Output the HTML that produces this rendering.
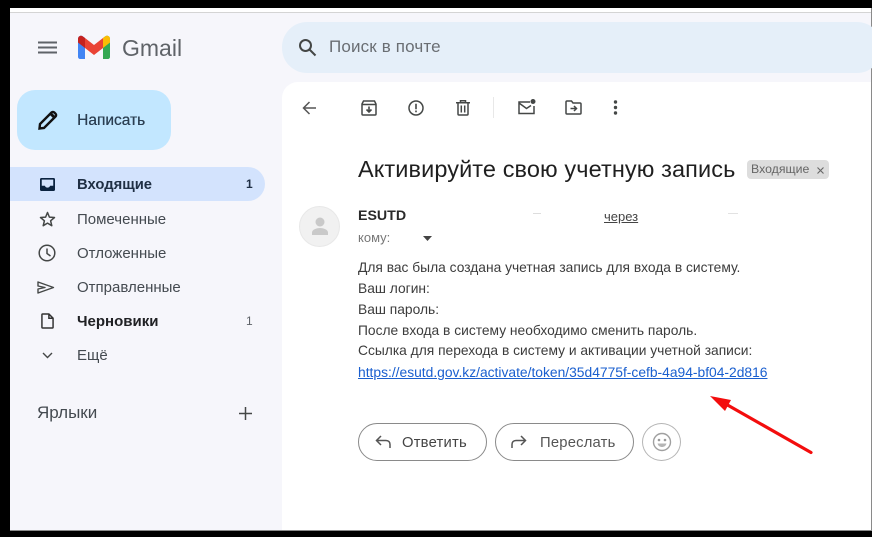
<!DOCTYPE html>
<html lang="ru"><head><meta charset="utf-8"><title>Gmail</title>
<style>
html,body{margin:0;padding:0;background:#000}
body{width:872px;height:537px;position:relative;overflow:hidden;font-family:"Liberation Sans",sans-serif}
#w{position:absolute;left:0;top:0;width:872px;height:537px;filter:blur(.35px)}
.a{position:absolute;white-space:nowrap}
.t{position:absolute;white-space:nowrap;line-height:20px;height:20px}
svg{position:absolute;overflow:visible}
</style></head>
<body>
<div id="w">
<div class="a" style="left:10px;top:8px;width:862px;height:4px;background:#fff"></div>
<div class="a" style="left:10px;top:12px;width:862px;height:1px;background:#d4d4d4"></div>
<div class="a" style="left:10px;top:13px;width:861px;height:517px;background:#f6f6fb"></div>
<div class="a" style="left:871px;top:8px;width:1px;height:522px;background:#8a8a8a"></div>
<div class="a" style="left:10px;top:530px;width:862px;height:1px;background:#8a8a8a"></div>

<!-- header -->
<svg style="left:38px;top:41px" width="19" height="13"><path d="M0 1.500H19M0 6.500H19M0 11.500H19" stroke="#5f6368" stroke-width="2" fill="none"/></svg>
<svg style="left:78px;top:35px" width="32" height="25" viewBox="0 0 32 25">
<path d="M0 4C0 1 3 0 5 1.500L7 3V24H2C1 24 0 23 0 22Z" fill="#4285f4"/>
<path d="M32 4C32 1 29 0 27 1.500L25 3V24H30C31 24 32 23 32 22Z" fill="#34a853"/>
<path d="M7 3V13L16 20L25 13V3L16 10Z" fill="#ea4335"/>
<path d="M0 4C0 1 3 0 5 1.500L7 3V13L0 7.500Z" fill="#c5221f"/>
<path d="M25 3L27 1.500C29 0 32 1 32 4V7.500L25 13Z" fill="#fbbc04"/>
</svg>
<div class="t" style="left:122px;top:36px;font-size:23px;line-height:24px;height:24px;color:#5f6368">Gmail</div>

<!-- search -->
<div class="a" style="left:282px;top:22px;width:600px;height:51px;border-radius:25px;background:#e5eff9"></div>
<svg style="left:298px;top:38px" width="19" height="19" viewBox="0 0 19 19"><circle cx="7.500" cy="7.500" r="5.500" fill="none" stroke="#444746" stroke-width="2"/><path d="M11.500 11.500L17.500 17.500" stroke="#444746" stroke-width="2"/></svg>
<div class="t" style="left:329px;top:37px;font-size:17px;letter-spacing:.15px;color:#6a6e73">Поиск в почте</div>

<!-- compose -->
<div class="a" style="left:17px;top:90px;width:154px;height:60px;border-radius:18px;background:#c2e7ff"></div>
<svg style="left:38px;top:110px" width="20" height="20" viewBox="0 0 20 20"><path d="M1.500 18.500L2 14L13.500 2.500C14.300 1.700 15.500 1.700 16.300 2.500L17.500 3.700C18.300 4.500 18.300 5.700 17.500 6.500L6 18Z" fill="none" stroke="#111" stroke-width="2.400"/><path d="M12.500 3.500L16.500 7.500" stroke="#111" stroke-width="3"/></svg>
<div class="t" style="left:77px;top:111px;font-size:15.500px;color:#2b3f52;text-shadow:.3px 0 0 #2b3f52">Написать</div>

<!-- nav -->
<div class="a" style="left:10px;top:167px;width:255px;height:34px;border-radius:0 17px 17px 0;background:#d3e3fd"></div>
<svg style="left:40px;top:178px" width="15" height="13" viewBox="0 0 17 16" preserveAspectRatio="none"><path d="M1.500 0H15.500C16.300 0 17 .7 17 1.500V14.500C17 15.300 16.300 16 15.500 16H1.500C.7 16 0 15.300 0 14.500V1.500C0 .7 .7 0 1.500 0ZM2 2V9.500H5.500C6 11 7 11.800 8.500 11.800S11 11 11.500 9.500H15V2Z" fill="#0b2340" fill-rule="evenodd"/></svg>
<div class="t" style="left:77px;top:175px;font-size:14.800px;font-weight:bold;color:#1f2f44">Входящие</div>
<div class="t" style="left:246px;top:174px;font-size:12px;font-weight:bold;color:#1f2f44">1</div>

<svg style="left:39px;top:211px" width="17" height="16" viewBox="0 0 17 16"><path d="M8.500 1.500L10.400 6.100L15.500 6.500L11.600 9.800L12.800 14.700L8.500 12.100L4.200 14.700L5.400 9.800L1.500 6.500L6.600 6.100Z" fill="none" stroke="#444746" stroke-width="1.500" stroke-linejoin="round"/></svg>
<div class="t" style="left:77px;top:210px;font-size:15px;color:#444a50">Помеченные</div>

<svg style="left:38px;top:244px" width="18" height="18" viewBox="0 0 18 18"><circle cx="9" cy="9" r="7.800" fill="none" stroke="#444746" stroke-width="1.500"/><path d="M9 4.500V9.500L12.500 12" fill="none" stroke="#444746" stroke-width="1.500"/></svg>
<div class="t" style="left:77px;top:244px;font-size:15px;color:#444a50">Отложенные</div>

<svg style="left:37px;top:281px" width="18" height="13" viewBox="0 0 18 13"><path d="M1 1L16.500 6.500L1 12V8L8 6.500L1 5Z" fill="none" stroke="#444746" stroke-width="1.400" stroke-linejoin="round"/></svg>
<div class="t" style="left:77px;top:278px;font-size:15px;color:#444a50">Отправленные</div>

<svg style="left:41px;top:313px" width="13" height="16" viewBox="0 0 14 17"><path d="M1 1.800C1 1.300 1.300 1 1.800 1H8.500L13 5.500V15.200C13 15.700 12.700 16 12.200 16H1.800C1.300 16 1 15.700 1 15.200ZM8.500 1V5.500H13" fill="none" stroke="#333" stroke-width="1.600"/></svg>
<div class="t" style="left:77px;top:312px;font-size:15px;font-weight:bold;color:#202124">Черновики</div>
<div class="t" style="left:246px;top:311px;font-size:12px;color:#5f6368">1</div>

<svg style="left:42px;top:352px" width="11" height="7"><path d="M1 1L5.500 5.500L10 1" fill="none" stroke="#444746" stroke-width="1.400"/></svg>
<div class="t" style="left:77px;top:346px;font-size:15px;color:#444a50">Ещё</div>

<div class="t" style="left:37px;top:403px;font-size:17px;color:#444a50">Ярлыки</div>
<svg style="left:239px;top:407px" width="13" height="13"><path d="M6.500 0V13M0 6.500H13" stroke="#444746" stroke-width="1.500"/></svg>

<!-- panel -->
<div class="a" style="left:282px;top:82px;width:589px;height:448px;background:#fff;border-radius:16px 0 0 0"></div>

<!-- toolbar -->
<svg style="left:302px;top:101px" width="14" height="14" viewBox="0 0 14 14"><path d="M14 7H2M7.500 1L1.500 7L7.500 13" fill="none" stroke="#555" stroke-width="1.500"/></svg>
<svg style="left:361px;top:100px" width="16" height="16" viewBox="0 0 16 16"><path d="M1 4L2.500 1H13.500L15 4V14C15 14.600 14.600 15 14 15H2C1.400 15 1 14.600 1 14ZM1 4.500H15" fill="none" stroke="#444746" stroke-width="1.500"/><path d="M8 6.500V11.500M5.500 9.500L8 12L10.500 9.500" fill="none" stroke="#444746" stroke-width="1.600"/></svg>
<svg style="left:408px;top:100px" width="16" height="16" viewBox="0 0 16 16"><circle cx="8" cy="8" r="7" fill="none" stroke="#444746" stroke-width="1.500"/><path d="M8 3.800V9.200M8 10.500V12.200" stroke="#444746" stroke-width="1.600"/></svg>
<svg style="left:456px;top:100px" width="14" height="16" viewBox="0 0 14 16"><path d="M0 2.800H14M4.500 2.500V.8H9.500V2.500M2 3V14C2 14.700 2.400 15 3 15H11C11.600 15 12 14.700 12 14V3M5.300 5.500V12.500M8.700 5.500V12.500" fill="none" stroke="#444746" stroke-width="1.500"/></svg>
<div class="a" style="left:493px;top:97px;width:1px;height:21px;background:#e8e8e8"></div>
<svg style="left:518px;top:99px" width="18" height="16" viewBox="0 0 18 16"><path d="M12 3H1V14.500H16V7M1 4L8.500 9.500L13 6.500" fill="none" stroke="#444746" stroke-width="1.500"/><circle cx="15" cy="2.500" r="2.500" fill="#444746"/></svg>
<svg style="left:565px;top:100px" width="17" height="15" viewBox="0 0 17 15"><path d="M1 2C1 1.400 1.400 1 2 1H6.500L8 3H15C15.600 3 16 3.400 16 4V13C16 13.600 15.600 14 15 14H2C1.400 14 1 13.600 1 13Z" fill="none" stroke="#444746" stroke-width="1.500"/><path d="M5.500 8.500H11M9 6L11.500 8.500L9 11" fill="none" stroke="#444746" stroke-width="1.500"/></svg>
<svg style="left:613px;top:100px" width="5" height="15"><circle cx="2.500" cy="2" r="1.700" fill="#444746"/><circle cx="2.500" cy="7.500" r="1.700" fill="#444746"/><circle cx="2.500" cy="13" r="1.700" fill="#444746"/></svg>

<!-- subject -->
<div class="t" style="left:358px;top:155px;font-size:23.500px;line-height:28px;height:28px;color:#1f1f1f;letter-spacing:.1px">Активируйте свою учетную запись</div>
<div class="a" style="left:747px;top:160px;width:82px;height:19px;border-radius:4px;background:#dddddd"></div>
<div class="t" style="left:751px;top:160px;font-size:12.300px;line-height:19px;height:19px;color:#666">Входящие</div>
<svg style="left:817px;top:167px" width="7" height="7"><path d="M.5 .5L6.500 6.500M6.500 .5L.5 6.500" stroke="#666" stroke-width="1.100"/></svg>

<!-- sender -->
<div class="a" style="left:299px;top:206px;width:41px;height:41px;border-radius:50%;background:#f1f1f1;border:1px solid #e8e8e8;box-sizing:border-box"></div>
<svg style="left:311px;top:216px" width="18" height="20" viewBox="0 0 18 20"><circle cx="9" cy="6" r="4.500" fill="#c9c9c9"/><path d="M1 19V16.500C1 13.500 6 12 9 12S17 13.500 17 16.500V19Z" fill="#c9c9c9"/></svg>
<div class="t" style="left:358px;top:206px;font-size:14.200px;font-weight:bold;color:#2a2a2a">ESUTD</div>
<div class="t" style="left:604px;top:207px;font-size:13px;color:#444;text-decoration:underline">через</div>
<div class="a" style="left:533px;top:213px;width:8px;height:1px;background:#ddd"></div>
<div class="a" style="left:728px;top:213px;width:10px;height:1px;background:#e2e2e2"></div>
<div class="t" style="left:358px;top:228px;font-size:13px;color:#777">кому:</div>
<svg style="left:423px;top:236px" width="9" height="5"><path d="M0 0H9L4.500 5Z" fill="#444"/></svg>

<!-- body -->
<div class="t" style="left:358px;top:258px;font-size:13.800px;color:#3c3c3c">Для вас была создана учетная запись для входа в систему.</div>
<div class="t" style="left:358px;top:279px;font-size:13.800px;color:#3c3c3c">Ваш логин:</div>
<div class="t" style="left:358px;top:300px;font-size:13.800px;color:#3c3c3c">Ваш пароль:</div>
<div class="t" style="left:358px;top:321px;font-size:13.800px;color:#3c3c3c">После входа в систему необходимо сменить пароль.</div>
<div class="t" style="left:358px;top:341px;font-size:13.800px;color:#3c3c3c">Ссылка для перехода в систему и активации учетной записи:</div>
<div class="t" style="left:358px;top:362px;font-size:13.840px;color:#1a5fcf;text-decoration:underline">https://esutd.gov.kz/activate/token/35d4775f-cefb-4a94-bf04-2d816</div>

<!-- arrow -->
<svg style="left:0;top:0" width="872" height="537"><path d="M811 452.500L724 403" stroke="#f30d0d" stroke-width="3.200" stroke-linecap="round" fill="none"/><path d="M710 396L731 400L725 411Z" fill="#f30d0d"/></svg>

<!-- buttons -->
<div class="a" style="left:358px;top:423px;width:129px;height:38px;box-sizing:border-box;border:1px solid #8a8a8a;border-radius:19px;background:#fff"></div>
<svg style="left:375px;top:435px" width="16" height="14" viewBox="0 0 16 14"><path d="M6 1L1.500 5.500L6 10M2 5.500H11C13.500 5.500 15 7 15 9.500V13" fill="none" stroke="#555" stroke-width="1.500"/></svg>
<div class="t" style="left:402px;top:433px;font-size:14.800px;color:#444;letter-spacing:.2px">Ответить</div>
<div class="a" style="left:495px;top:423px;width:139px;height:38px;box-sizing:border-box;border:1px solid #8a8a8a;border-radius:19px;background:#fff"></div>
<svg style="left:511px;top:435px" width="16" height="14" viewBox="0 0 16 14"><path d="M10 1L14.500 5.500L10 10M14 5.500H5C2.500 5.500 1 7 1 9.500V13" fill="none" stroke="#555" stroke-width="1.500"/></svg>
<div class="t" style="left:540px;top:433px;font-size:14.800px;color:#555;letter-spacing:.2px">Переслать</div>
<div class="a" style="left:642px;top:423px;width:39px;height:38px;box-sizing:border-box;border:1px solid #b5b5b5;border-radius:50%;background:#fff"></div>
<svg style="left:652px;top:432px" width="20" height="20" viewBox="0 0 20 20"><circle cx="10" cy="10" r="8.500" fill="none" stroke="#a0a0a0" stroke-width="1.400"/><circle cx="7" cy="8" r="1.300" fill="#999"/><circle cx="13" cy="8" r="1.300" fill="#999"/><path d="M5.500 11.500H14.500C13.800 14 12 15 10 15S6.200 14 5.500 11.500Z" fill="#b5b5b5"/></svg>
</div>
</body></html>
